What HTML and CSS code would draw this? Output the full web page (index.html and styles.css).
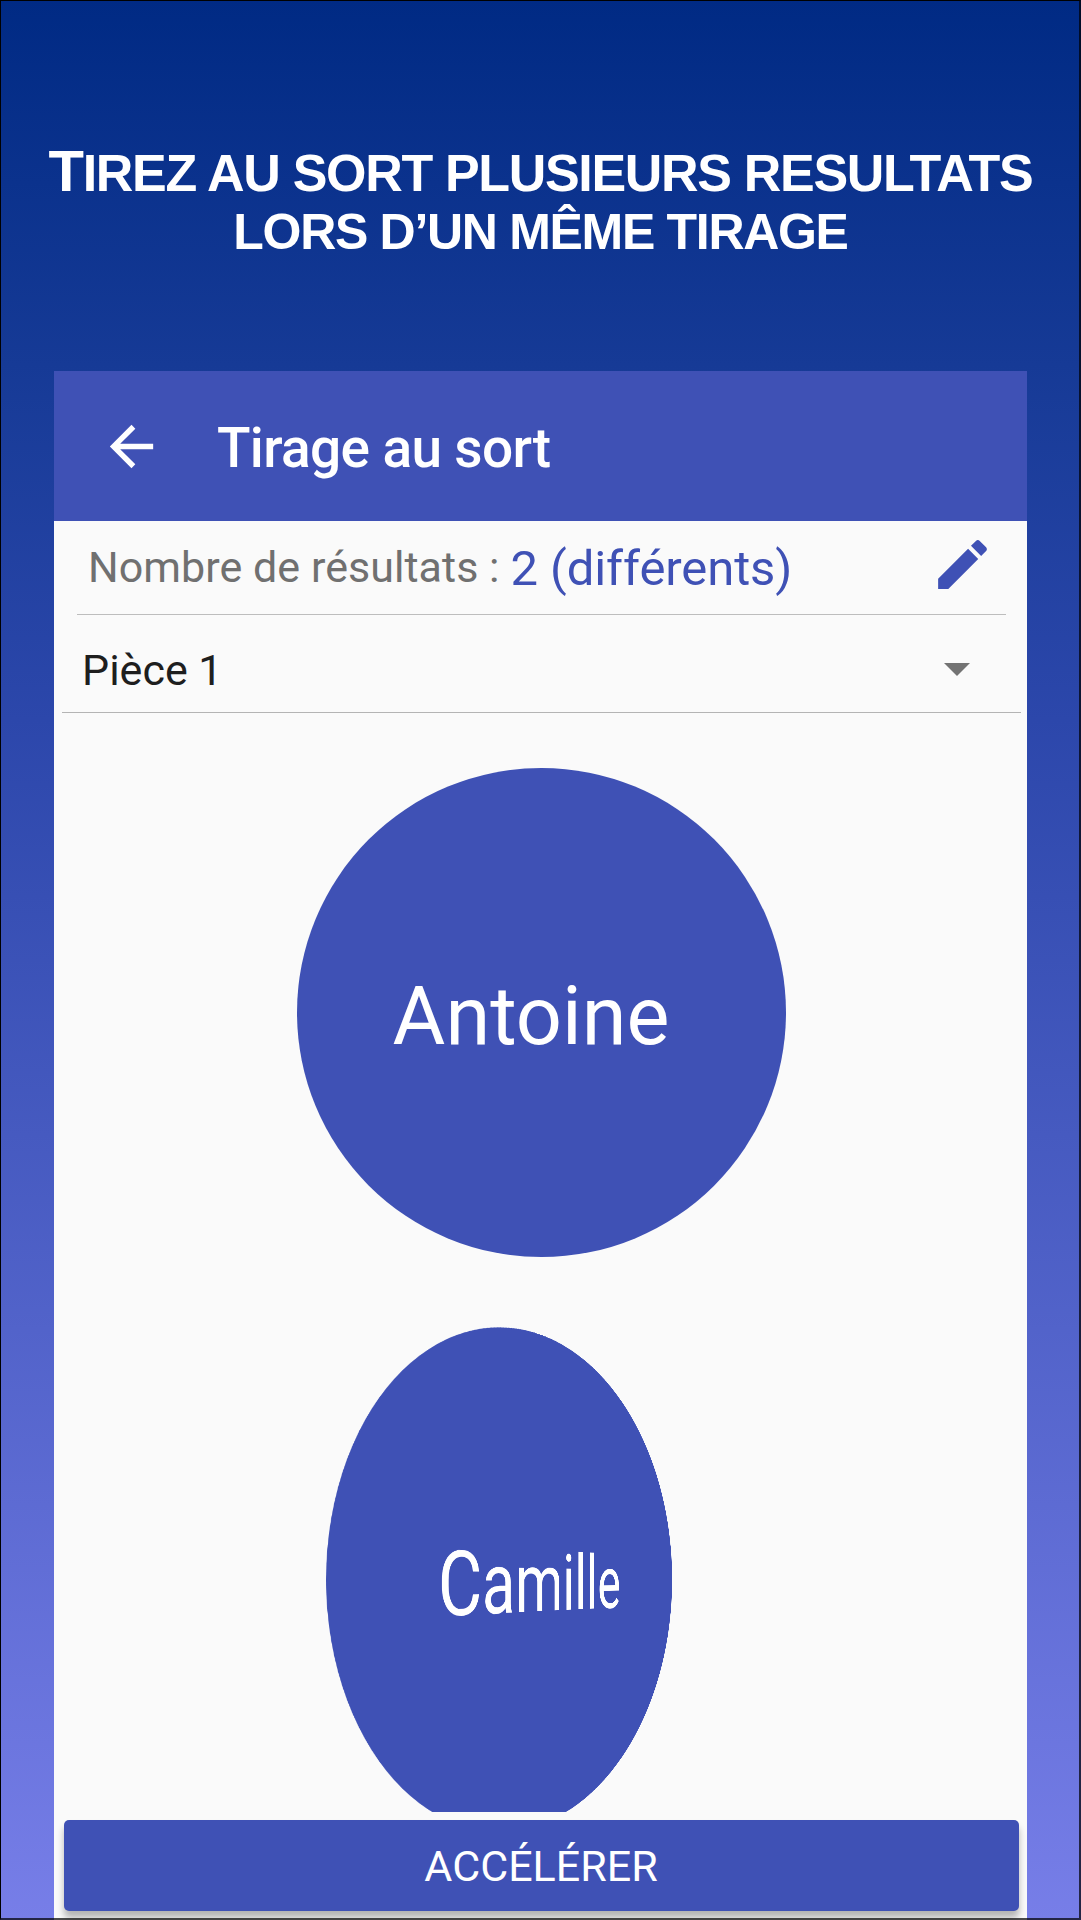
FILE: index.html
```html
<!DOCTYPE html>
<html lang="fr">
<head>
  <meta charset="UTF-8" />
  <meta name="viewport" content="width=device-width, initial-scale=1.0" />
  <title>Tirage au sort</title>
  <link rel="stylesheet" href="styles.css">
</head>
<body>
  <div class="promo">
    <h1 class="headline">
      <span class="headline-row first"><span class="initial">T</span>IREZ AU SORT PLUSIEURS RESULTATS</span>
      <span class="headline-row second">LORS D’UN MÊME TIRAGE</span>
    </h1>
    <div class="screen">
      <header class="toolbar">
        <svg class="back-icon" viewBox="0 0 24 24"><path d="M20 11H7.83l5.59-5.59L12 4l-8 8 8 8 1.41-1.41L7.83 13H20v-2z"/></svg>
        <span class="toolbar-title">Tirage au sort</span>
      </header>
      <div class="results-row">
        <span class="results-label">Nombre de résultats :</span>
        <span class="results-value">2 (différents)</span>
        <svg class="edit-icon" viewBox="0 0 24 24"><path d="M3 17.25V21h3.75L17.81 9.94l-3.75-3.75L3 17.25zM20.71 7.04c.39-.39.39-1.02 0-1.41l-2.34-2.34c-.39-.39-1.02-.39-1.41 0l-1.83 1.83 3.75 3.75 1.83-1.83z"/></svg>
      </div>
      <div class="spinner">
        <span>Pièce 1</span>
        <svg class="caret" viewBox="0 0 26 13"><path d="M0 0h26L13 13z"/></svg>
      </div>
      <main class="draws">
        <div class="coin"><span class="name settled">Antoine</span></div>
        <!-- second coin is still spinning -->
        <div class="coin spinning"><span class="name">Camille</span></div>
      </main>
      <button class="speed-btn">ACCÉLÉRER</button>
    </div>
    <div class="frame"></div>
  </div>
</body>
</html>
```
FILE: styles.css
```css
* {
  box-sizing: border-box;
}
body {
  margin: 0;
  font-family: Roboto, sans-serif;
}
.promo {
  position: relative;
  width: 1081px;
  height: 1920px;
  overflow: hidden;
  display: flex;
  flex-direction: column;
  background: linear-gradient(180deg, #002a84 0%, #163a96 19%, #2c47ab 37.5%, #777ee8 100%);
}
/* Thin dark frame over everything */
.frame {
  position: absolute;
  inset: 0;
  border: 1px solid #000;
  border-right: 2px solid rgba(0, 0, 0, 0.7);
  border-bottom: 2px solid rgba(0, 0, 0, 0.7);
  pointer-events: none;
}
.headline {
  margin: 0;
  height: 371px;
  padding-top: 141px;
  display: flex;
  flex-direction: column;
  align-items: center;
  font-family: "Liberation Sans", Arial, sans-serif;
  font-weight: 700;
  color: #fff;
}
.headline-row {
  height: 59px;
  line-height: 60px;
  font-size: 52px;
  letter-spacing: -1.32px;
  white-space: nowrap;
}
.initial {
  font-size: 58px;
}
.second {
  padding-top: 2px;
  font-size: 50px;
  letter-spacing: -1.3px;
}
.screen {
  width: 973px;
  height: 1549px;
  margin-left: 54px;
  display: flex;
  flex-direction: column;
  background: #fafafa;
  overflow: hidden;
}
.toolbar {
  height: 150px;
  padding-left: 45px;
  display: flex;
  align-items: center;
  background: #3f51b5;
  color: #fff;
}
.back-icon {
  width: 65px;
  height: 65px;
  fill: #fff;
}
.toolbar-title {
  margin-left: 53px;
  padding-top: 4px;
  font-size: 55px;
  font-weight: 500;
  letter-spacing: -0.65px;
  line-height: 64px;
}
.results-row {
  height: 94px;
  margin: 0 21px 0 23px;
  padding: 0 11px 3px 11px;
  display: flex;
  align-items: center;
  border-bottom: 1px solid #bdbdbd;
}
.results-label {
  padding-top: 1px;
  font-size: 43px;
  letter-spacing: 0.05px;
  color: #707070;
}
.results-value {
  margin-left: 11px;
  padding-top: 4px;
  font-size: 49px;
  letter-spacing: -0.1px;
  color: #3f51b5;
}
.edit-icon {
  width: 65px;
  height: 65px;
  margin-left: auto;
  margin-bottom: 3px;
  fill: #3f51b5;
}
.spinner {
  height: 98px;
  margin: 0 6px 0 8px;
  padding: 12px 51px 0 20px;
  display: flex;
  align-items: center;
  justify-content: space-between;
  border-bottom: 1px solid #b4b4b4;
  font-size: 43px;
  color: #1e1e1e;
}
.caret {
  width: 26px;
  height: 13px;
  fill: #737373;
}
.draws {
  flex: none;
  height: 1099px;
  padding: 55px 0 0 2px;
  display: flex;
  flex-direction: column;
  align-items: center;
  gap: 78px;
  overflow: hidden;
}
.coin {
  flex: none;
  width: 489px;
  height: 489px;
  border-radius: 50%;
  display: flex;
  align-items: center;
  justify-content: center;
  background: #3f51b5;
  color: #fff;
  font-size: 81px;
}
.spinning {
  transform: perspective(745px) rotateY(48.3deg);
}
.name {
  padding-top: 8px;
}
.settled {
  padding-right: 21px;
}
.speed-btn {
  flex: none;
  width: 955px;
  height: 91px;
  margin: 8px 0 0 10px;
  padding: 1px 1px 0 0;
  border: none;
  border-radius: 5px;
  background: #3f51b5;
  box-shadow: 0 7px 7px rgba(0, 0, 0, 0.28);
  color: #fff;
  font-family: inherit;
  font-size: 43px;
}
```
